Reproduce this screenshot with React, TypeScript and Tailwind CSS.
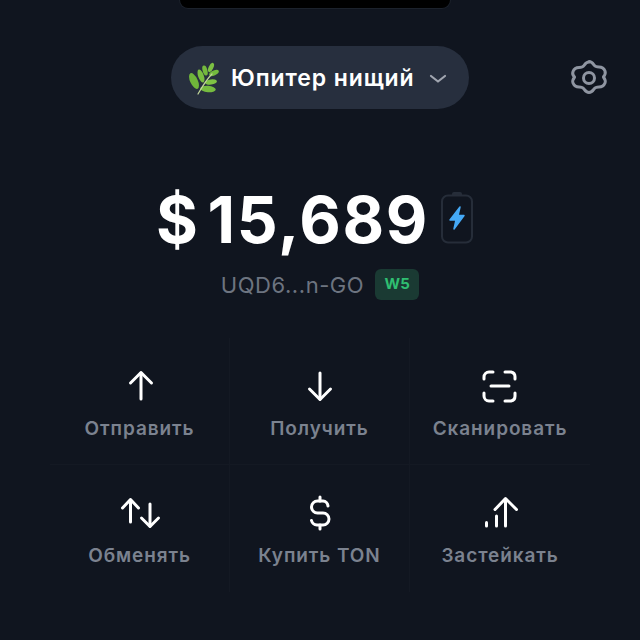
import React from "react";

const font = { fontFamily: '"Inter", "Noto Sans", sans-serif' };

function Leaf() {
  const leaves: [number, number, number, number, number, string][] = [
    [7, 20, 3.800, 8.500, -25, "#6fb53a"],
    [14, 15, 2.800, 6.800, -20, "#79bd40"],
    [18, 9.500, 2.400, 5.200, -15, "#74b93d"],
    [24, 6.500, 2.300, 5, 25, "#7cc043"],
    [27, 12, 5.200, 2.400, -25, "#74ba3e"],
    [24, 21, 6, 2.600, -8, "#7fc344"],
    [21, 28, 7.800, 3.200, 4, "#76bb40"],
  ];
  return (
    <svg width="34" height="34" viewBox="0 0 34 34" fill="none">
      {leaves.map(([cx, cy, rx, ry, r, c], i) => (
        <ellipse key={i} cx={cx} cy={cy} rx={rx} ry={ry} fill={c} transform={`rotate(${r} ${cx} ${cy})`} />
      ))}
      <path d="M11 33 C15 26 19 19 25 13" stroke="#c2d69a" strokeWidth="1.200" strokeLinecap="round" />
    </svg>
  );
}

function Icon({ children }: { children: React.ReactNode }) {
  return (
    <svg className="overflow-visible" width="36" height="36" viewBox="0 0 36 36" fill="none" stroke="#fff" strokeWidth="3" strokeLinecap="round" strokeLinejoin="round">
      {children}
    </svg>
  );
}

const actions: { label: string; icon: React.ReactNode }[] = [
  { label: "Отправить", icon: <><path d="M19 31V5" /><path d="M8.500 15 19 4.500 29.500 15" /></> },
  { label: "Получить", icon: <><path d="M18 5v26" /><path d="M7.500 21 18 31.500 28.500 21" /></> },
  {
    label: "Сканировать",
    icon: (
      <>
        <path d="M9 18h18" />
        <path d="M11 4H7a5 5 0 0 0-5 5v2" />
        <path d="M23 4h6a5 5 0 0 1 4 5v2" />
        <path d="M2 25v3a5 5 0 0 0 5 5h4" />
        <path d="M33 25v3a5 5 0 0 1-4 5h-6" />
      </>
    ),
  },
  {
    label: "Обменять",
    icon: (
      <>
        <path d="M8.500 27V5" />
        <path d="M.5 13 8.500 4.500 16.500 13" />
        <path d="M28 9v22" />
        <path d="M19.500 23 28 31.500 36.500 23" />
      </>
    ),
  },
  {
    label: "Купить TON",
    icon: (
      <>
        <path d="M18 2v4" />
        <path d="M18 30v4" />
        <path d="M26 11a5.500 5.500 0 0 0-5-5h-5.500a6 6 0 0 0 0 12H21a6 6 0 0 1 0 12h-6a6 6 0 0 1-5.500-4.500" />
      </>
    ),
  },
  {
    label: "Застейкать",
    icon: (
      <>
        <path d="M4.500 31v-3.500" />
        <path d="M14.500 31V21" />
        <path d="M23.500 31V5" />
        <path d="M13 14.500 23.500 3.500 34.500 14.500" />
      </>
    ),
  },
];

function Action({ label, icon, border }: { label: string; icon: React.ReactNode; border: string }) {
  return (
    <div className={`flex h-[127px] flex-col items-center ${border}`}>
      <div className="mt-[30px] h-[36px]"><Icon>{icon}</Icon></div>
      <div className="mt-[13px] text-[19px] font-semibold leading-[24px] tracking-[0.9px] text-[#7b828f]">{label}</div>
    </div>
  );
}

export default function App() {
  return (
    <div style={font} className="flex h-[640px] w-[640px] flex-col items-center overflow-hidden bg-[#10151f]">
      <div className="ml-[-10px] h-[9px] w-[272px] rounded-b-[14px] border-x border-b border-[#1c222c] bg-black" />

      <div className="mt-[37px] flex w-full justify-center">
        <div className="relative">
          <div className="flex h-[63px] w-[298px] items-center rounded-full bg-[#272f3e] pl-[16px]">
            <Leaf />
            <span className="ml-[10px] mt-[1px] text-[23px] font-semibold leading-none tracking-[0.9px] text-white">Юпитер нищий</span>
            <svg className="ml-[14px] mt-[3px]" width="18" height="10" viewBox="0 0 18 10" fill="none" stroke="#a1a6b0" strokeWidth="2.200" strokeLinecap="round" strokeLinejoin="round">
              <path d="M2 2l7 5.500L16 2" />
            </svg>
          </div>
          <svg className="absolute left-[398px] top-[12px]" width="40" height="40" viewBox="0 0 40 40" fill="none" stroke="#8f95a1" strokeWidth="3">
            <path
              d="M20 3.500c2.800 0 3.800 1.800 5 3.500 1 1.400 3 2 5 2 3 0 5 1.500 6 4s-.3 4.300-1.600 6c1.300 1.700 2.600 3.500 1.600 6s-3 4-6 4c-2 0-4 .6-5 2-1.200 1.700-2.200 3.500-5 3.500s-3.800-1.800-5-3.500c-1-1.400-3-2-5-2-3 0-5-1.500-6-4s.3-4.300 1.600-6C4.300 17.800 3 16 4 13.500s3-4 6-4c2 0 4-.6 5-2 1.200-1.700 2.200-3.500 5-3.500Z"
              strokeLinejoin="round"
            />
            <circle cx="20" cy="20" r="5.500" />
          </svg>
        </div>
      </div>

      <div className="ml-[-10px] mt-[72px] flex items-center">
        <span className="text-[64px] font-bold leading-[78px] tracking-[1.7px] text-white">$<span className="ml-[8px]">15,689</span></span>
        <svg className="ml-[11px] mt-[-6px]" width="34" height="56" viewBox="0 0 34 56" fill="none">
          <path d="M12 5a2 2 0 0 1 2-2h6a2 2 0 0 1 2 2v1H12Z" fill="#262d39" />
          <rect x="2" y="6.500" width="30" height="47" rx="6" stroke="#262d39" strokeWidth="2" />
          <path d="M20 18 10 31h6l-2 9 10-13.500H18l2-8.500Z" fill="#45a9f5" stroke="#45a9f5" strokeWidth="1.500" strokeLinejoin="round" />
        </svg>
      </div>

      <div className="mt-[10px] flex items-center">
        <span className="text-[22px] leading-[30px] tracking-[0.55px] text-[#6d7480]">UQD6...n-GO</span>
        <span className="ml-[11px] flex h-[31px] w-[44px] items-center justify-center rounded-[6px] bg-[#1a3a33] text-[15px] font-bold text-[#2fbf71]">W5</span>
      </div>

      <div className="mt-[38px] grid w-[540px] grid-cols-3">
        {actions.map((a, i) => (
          <Action
            key={a.label}
            label={a.label}
            icon={a.icon}
            border={`${i < 3 ? "border-b border-[#141923]" : ""} ${i % 3 !== 2 ? "border-r border-[#141923]" : ""}`}
          />
        ))}
      </div>
    </div>
  );
}
